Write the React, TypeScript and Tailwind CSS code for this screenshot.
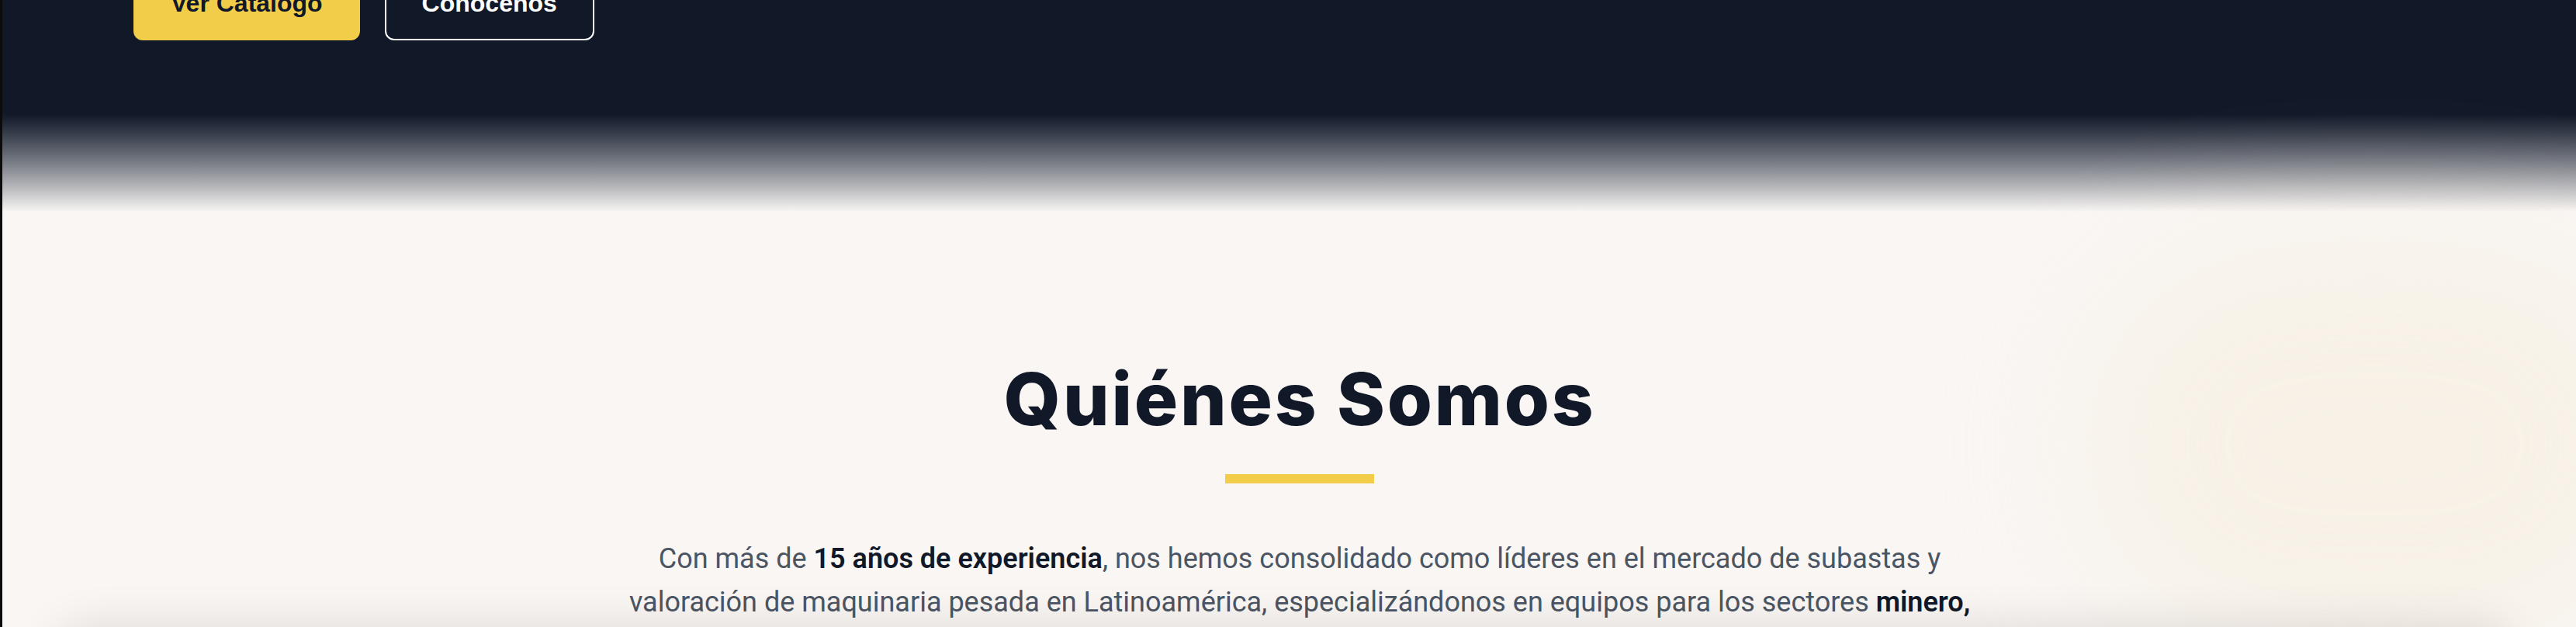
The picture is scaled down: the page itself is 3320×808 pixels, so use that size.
import React from "react";

const BG = "bg-[#f9f6f4]";

export default function App() {
    return (
        // Ventana completa, recortada al alto de la captura
        <div className={`relative flex h-[808px] overflow-hidden ${BG} font-['Roboto',sans-serif]`}>
            {/* Borde oscuro de la ventana */}
            <div className="w-[3px] shrink-0 bg-[#0b0b0b]" />

            <main className="flex min-w-0 flex-1 flex-col">
                {/* Final del hero con los botones */}
                <section className="shrink-0 bg-[#111827] pb-[95px] pl-[169px]">
                    <div className="-mt-[44px] flex gap-[32px] font-['Liberation_Sans',sans-serif]">
                        <button className="h-[96px] rounded-[12px] bg-[#f2cd4a] px-[48px] text-[32px] font-bold text-[#111827]">
                            Ver Catálogo
                        </button>
                        <button className="h-[96px] rounded-[12px] border-2 border-white px-[46px] text-[32px] font-bold text-white">
                            Conócenos
                        </button>
                    </div>
                </section>

                {/* Transición del hero al fondo claro */}
                <div className="h-[126px] shrink-0 bg-linear-to-b from-[#111827] to-[#f9f6f4]" />

                {/* Quiénes Somos */}
                <section className="relative shrink-0 pt-[194px] pl-[27px]">
                    {/* Imagen difuminada de fondo */}
                    <div className="pointer-events-none absolute -right-[120px] top-[40px] h-[520px] w-[760px] rounded-full bg-[#f5ead3] opacity-40 blur-[90px]" />

                    <div className="relative mx-auto flex max-w-[1792px] flex-col items-center text-center">
                        <h2 className="font-['Inter',sans-serif] text-[94px] leading-none font-extrabold tracking-[2.8px] text-[#111827]">
                            Quiénes Somos
                        </h2>
                        <div className="mt-[50px] h-[12px] w-[192px] bg-[#f2cd4a]" />
                        <p className="mt-[69px] text-[36px] leading-[56px] text-[#4b5563]">
                            Con más de <strong className="font-semibold text-[#111827]">15 años de experiencia</strong>, nos hemos
                            consolidado como líderes en el mercado de subastas y valoración de maquinaria pesada en
                            Latinoamérica, especializándonos en equipos para los sectores{" "}
                            <strong className="font-semibold text-[#111827]">minero, construcción y forestal</strong>. Nuestro
                            compromiso es ofrecer transparencia y confianza en cada operación.
                        </p>
                    </div>
                </section>
            </main>

            {/* Sombra de la tarjeta que empieza bajo el borde */}
            <div className="pointer-events-none absolute left-[70px] right-[80px] top-[814px] h-[300px] rounded-[48px] bg-[#f9f6f4] shadow-[0_-6px_60px_rgba(0,0,0,0.12)]" />
        </div>
    );
}
